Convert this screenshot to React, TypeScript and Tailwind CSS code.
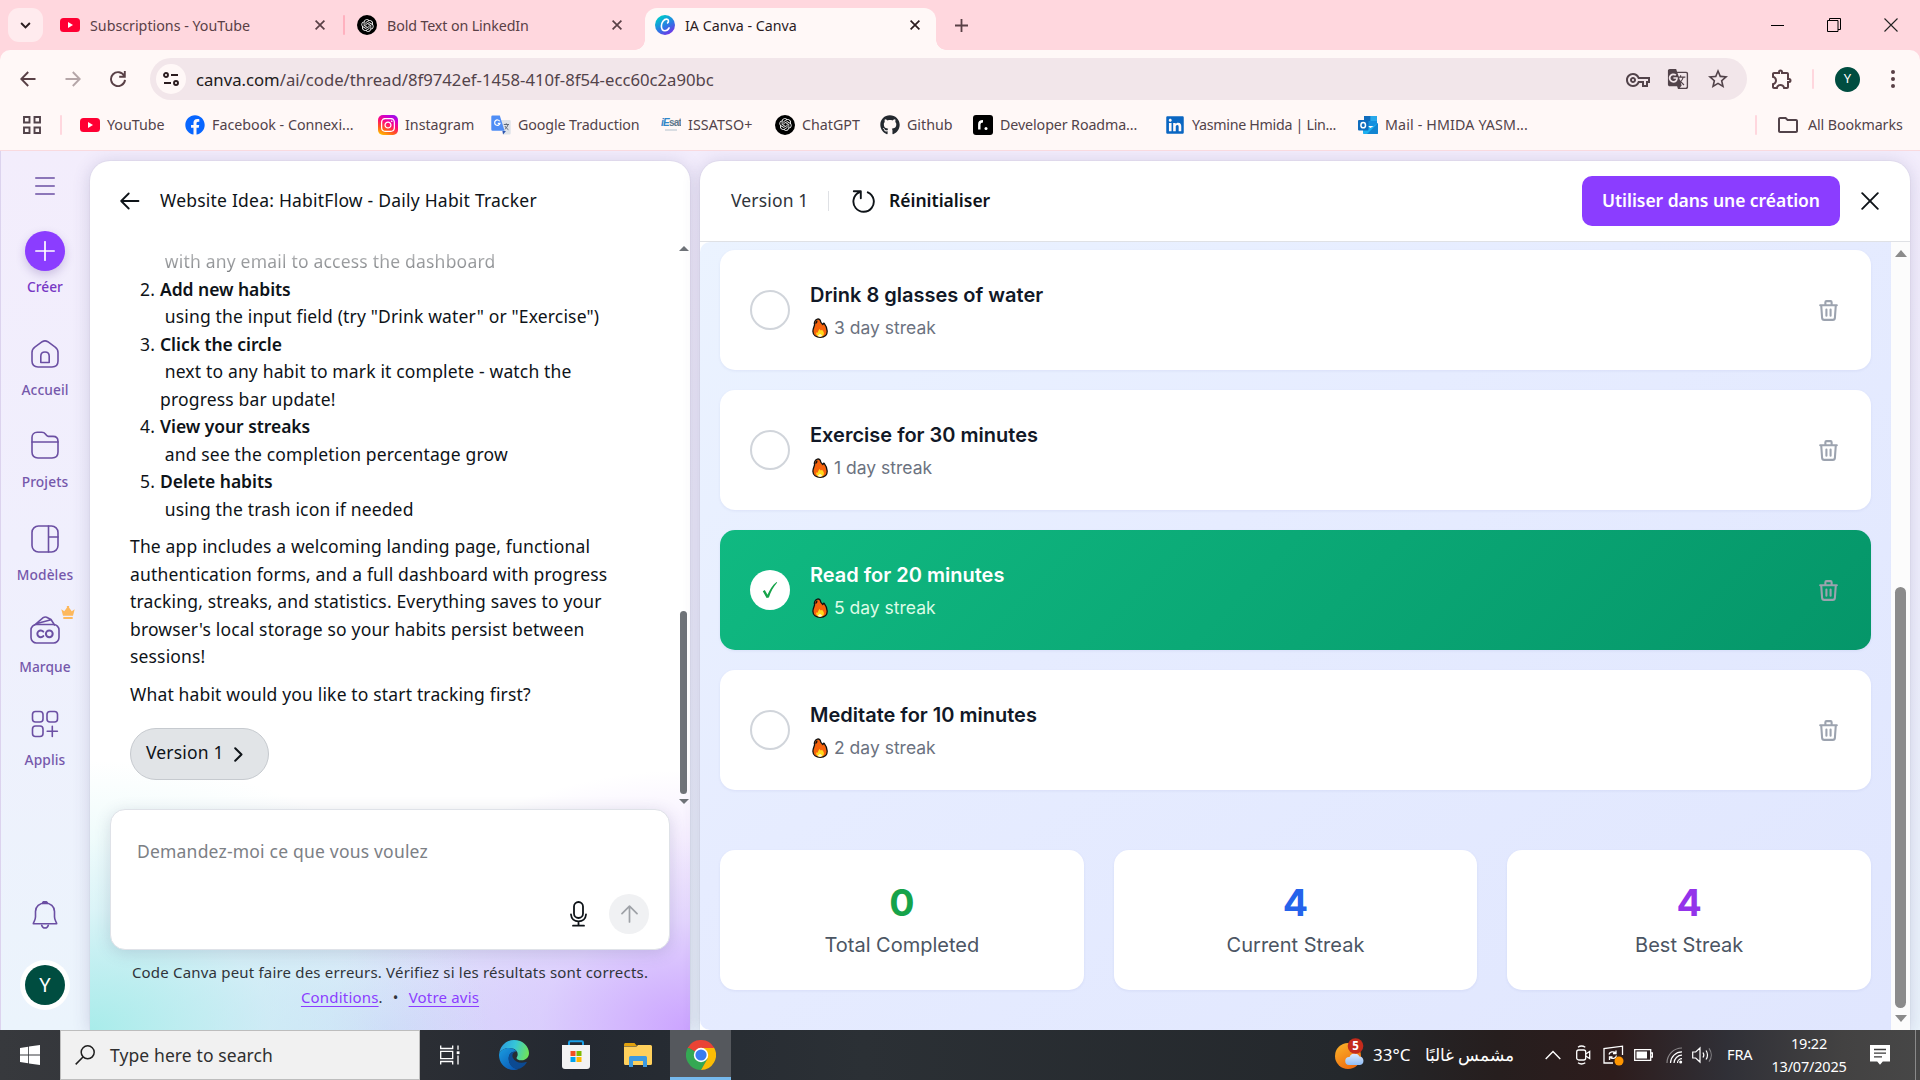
import type { ReactNode } from "react";
import { RiOpenaiFill } from "react-icons/ri";
import { FaFacebook, FaGithub, FaInstagram, FaLinkedin } from "react-icons/fa";
import { MdGTranslate, MdOutlineExtension, MdOutlineFolder, MdOutlineVpnKey, MdStarOutline } from "react-icons/md";

/* ---------- small brand marks ---------- */

function YouTubeMark() {
  return (
    <svg viewBox="0 0 20 14" className="h-[14px] w-5 shrink-0">
      <rect width="20" height="14" rx="3.5" fill="#ff0033" />
      <path d="M8 4v6l5-3z" fill="#fff" />
    </svg>
  );
}

function OpenAiMark() {
  return (
    <span className="flex size-5 shrink-0 items-center justify-center rounded-full bg-black">
      <RiOpenaiFill className="size-[15px] text-white" />
    </span>
  );
}

function CanvaMark() {
  return (
    <svg viewBox="0 0 20 20" className="size-5 shrink-0">
      <defs>
        <linearGradient id="canva" x1="0.2" y1="0" x2="0.8" y2="1">
          <stop offset="0.1" stopColor="#00c4cc" />
          <stop offset="0.55" stopColor="#2a7be4" />
          <stop offset="1" stopColor="#7d2ae8" />
        </linearGradient>
      </defs>
      <circle cx="10" cy="10" r="10" fill="url(#canva)" />
      <path d="M12.600 7.900c1.200-.9 1.400-3.600-.9-3.800-2.800-.1-5.300 3.300-5.300 6.900 0 2.900 1.500 4.700 3.600 4.700 1.900 0 3.300-1.200 4.100-2.800" fill="none" stroke="#fff" strokeWidth="1.600" strokeLinecap="round" />
    </svg>
  );
}

function InstagramMark() {
  return (
    <span className="flex size-5 shrink-0 items-center justify-center rounded-[5px] bg-[linear-gradient(25deg,#ffc400_5%,#ff5a1f_30%,#ff0a78_55%,#c800d8_80%,#7a1cf0)]">
      <FaInstagram className="size-4 text-white" />
    </span>
  );
}

function TranslateMark() {
  return (
    <svg viewBox="0 0 20 20" className="size-5 shrink-0">
      <path d="M8 5h10.500a1.200 1.200 0 0 1 1.200 1.200v12a1.200 1.200 0 0 1-1.200 1.200H12z" fill="#dfe3e8" />
      <path d="M11.500 16l3.500 0-3 3.600z" fill="#2f56b0" />
      <path d="M1.500.5h7.300L13.500 15.800H1.500A1.200 1.200 0 0 1 .3 14.600V1.700A1.200 1.200 0 0 1 1.500.5z" fill="#4f8df5" />
      <path d="M8.700 6.300A2.700 2.700 0 1 0 9 8.300H6.800" fill="none" stroke="#fff" strokeWidth="1.200" />
      <path d="M12.800 9.500h5.200M15.300 8.300v1.200M17 9.500c-.5 2-1.800 3.700-3.200 4.900M13.900 11c.7 1.500 2 2.800 3.500 3.700" fill="none" stroke="#5f6b7a" strokeWidth="1" />
    </svg>
  );
}

function IssatMark() {
  return (
    <span className="flex size-5 shrink-0 flex-col items-center justify-center overflow-hidden font-['Liberation_Sans'] leading-none">
      <span className="text-[10px] font-bold tracking-[-0.8px] text-[#62788c]">
        <i className="text-[#2f86c8]">iE</i>sat
      </span>
      <span className="mt-px h-[2px] w-3 bg-[#d9dde2]" />
    </span>
  );
}

function RoadmapMark() {
  return (
    <svg viewBox="0 0 20 20" className="size-5 shrink-0">
      <rect width="20" height="20" rx="3" fill="#000" />
      <path d="M6.300 14.500V9.200c0-1.800 1-2.900 3.700-2.900" fill="none" stroke="#fff" strokeWidth="2.400" />
      <circle cx="13" cy="13.400" r="1.500" fill="#fff" />
    </svg>
  );
}

function OutlookMark() {
  return (
    <svg viewBox="0 0 20 20" className="size-5 shrink-0">
      <path d="M6 1h13v10H6z" fill="#1490df" />
      <path d="M6 1h6.500v5H6z" fill="#0f6cbd" />
      <path d="M12.500 1H19v5h-6.500z" fill="#28a8ea" />
      <path d="M5 8l7.500 5L20 8v10.300a.7.7 0 0 1-.7.7H5.700a.7.7 0 0 1-.7-.7z" fill="#1db0f0" />
      <path d="M20 8v10.300a.7.7 0 0 1-.7.7H9z" fill="#0a62b8" opacity=".55" />
      <rect y="5" width="10.500" height="10.500" rx="1" fill="#0f6cbd" />
      <ellipse cx="5.200" cy="10.200" rx="2.300" ry="2.600" fill="none" stroke="#fff" strokeWidth="1.500" />
    </svg>
  );
}

/* ---------- browser chrome ---------- */

function CloseGlyph({ color }: { color: string }) {
  return (
    <svg viewBox="0 0 10 10" className="size-[10px] shrink-0" stroke={color} strokeWidth="1.700">
      <path d="M.6.6l8.800 8.800M9.400.6L.6 9.400" />
    </svg>
  );
}

function TabStrip() {
  return (
    <div className="flex h-[50px] bg-[#ffd7de] text-[14.25px] text-[#594046]">
      <div className="ml-2 mt-2 flex h-[34px] w-[35px] items-center justify-center rounded-[11px] bg-[#ffebee]">
        <svg viewBox="0 0 12 8" className="h-[7px] w-[11px]" fill="none" stroke="#2b1c1f" strokeWidth="2.200">
          <path d="M1 1.200l5 5 5-5" />
        </svg>
      </div>
      <div className="ml-[17px] flex w-[285px] items-center">
        <YouTubeMark />
        <span className="ml-[10px] flex-1 whitespace-nowrap pt-px">Subscriptions - YouTube</span>
        <CloseGlyph color="#594046" />
        <span className="ml-[18px] h-5 w-[2px] rounded bg-[#ffb1bf]" />
      </div>
      <div className="ml-[12px] flex w-[265px] items-center">
        <OpenAiMark />
        <span className="ml-[10px] flex-1 whitespace-nowrap pt-px tracking-[-0.12px]">Bold Text on LinkedIn</span>
        <CloseGlyph color="#594046" />
      </div>
      <div className="ml-[13px] flex w-[10px] items-end">
        <span className="size-[10px] bg-[radial-gradient(circle_at_0_0,#ffd7de_9.500px,#fff8f7_10px)]" />
      </div>
      <div className="mt-2 flex h-[42px] w-[291px] items-center rounded-t-[12px] bg-[#fff8f7] pb-2 pl-[10px] pr-[16px] text-[#2b1c1f]">
        <CanvaMark />
        <span className="ml-[10px] flex-1 whitespace-nowrap pt-px">IA Canva - Canva</span>
        <CloseGlyph color="#2b1c1f" />
      </div>
      <div className="flex w-[10px] items-end">
        <span className="size-[10px] bg-[radial-gradient(circle_at_100%_0,#ffd7de_9.500px,#fff8f7_10px)]" />
      </div>
      <div className="ml-[9px] flex flex-1 items-center">
        <svg viewBox="0 0 13 13" className="size-[13px]" stroke="#594046" strokeWidth="1.800">
          <path d="M6.500 0v13M0 6.500h13" />
        </svg>
      </div>
      <div className="flex items-center gap-[43px] pr-[22px]">
        <span className="h-px w-[13px] bg-black" />
        <svg viewBox="0 0 14 14" className="size-[14px]" fill="none" stroke="#000">
          <path d="M.5 2.500h10.500v11H.5zM2.500 2.500v-2h11v11h-2.500" />
        </svg>
        <svg viewBox="0 0 14 14" className="size-[14px]" stroke="#222" strokeWidth="1.100">
          <path d="M.5.5l13 13M13.500.5l-13 13" />
        </svg>
      </div>
    </div>
  );
}

function AddressBar() {
  return (
    <div className="bg-[#ffd7de]">
      <div className="flex h-[58px] items-center rounded-t-[10px] bg-[#fff8f7] pl-5">
        <svg viewBox="0 0 16 16" className="size-4" fill="none" stroke="#594046" strokeWidth="1.900">
          <path d="M15.500 8H1.500M8.200 1L1.300 8l6.900 7" />
        </svg>
        <svg viewBox="0 0 16 16" className="ml-[29px] size-4" fill="none" stroke="#b5a6a8" strokeWidth="1.900">
          <path d="M.5 8h14M7.800 1l6.900 7-6.900 7" />
        </svg>
        <svg viewBox="0 0 16 16" className="ml-[29px] size-4" fill="none" stroke="#594046" strokeWidth="1.900">
          <path d="M14.300 5A7 7 0 1 0 15 8.800M14.800 0v5.800H9.200" />
        </svg>
        <div className="ml-[24px] flex h-[42px] w-[1597px] items-center rounded-full bg-[#f2e6ea] pl-[6px] pr-[17px]">
          <span className="flex size-[30px] items-center justify-center rounded-full bg-[#fff8f7]">
            <svg viewBox="0 0 16 14" className="h-[14px] w-4" fill="none" stroke="#2b1c1f" strokeWidth="1.900">
              <circle cx="3" cy="3" r="2" />
              <path d="M8 3h7M1 11h7" />
              <circle cx="13" cy="11" r="2" />
            </svg>
          </span>
          <span className="ml-[10px] flex-1 pt-[2px] text-[16.7px]  text-[#52434a]">
            <span className="text-[#201a1b]">canva.com</span>/ai/code/thread/8f9742ef-1458-410f-8f54-ecc60c2a90bc
          </span>
          <MdOutlineVpnKey className="mt-px size-6 text-[#52434a]" />
          <MdGTranslate className="ml-[17px] size-[22px] text-[#52434a]" />
          <MdStarOutline className="ml-[17px] size-6 text-[#52434a]" />
        </div>
        <MdOutlineExtension className="ml-[23px] size-6 text-[#594046]" />
        <span className="ml-[18px] h-5 w-[2px] rounded bg-[#ffd7de]" />
        <span className="ml-[21px] flex size-[25px] items-center justify-center rounded-full bg-[#004d40] text-[13px] text-white">Y</span>
        <span className="ml-[31px] flex flex-col gap-[3px]">
          <i className="size-1 rounded-full bg-[#594046]" />
          <i className="size-1 rounded-full bg-[#594046]" />
          <i className="size-1 rounded-full bg-[#594046]" />
        </span>
      </div>
    </div>
  );
}

function Bookmark({ icon, label, className }: { icon: ReactNode; label: string; className: string }) {
  return (
    <div className={`flex shrink-0 items-center gap-[7px] whitespace-nowrap ${className}`}>
      {icon}
      <span>{label}</span>
    </div>
  );
}

function BookmarksBar() {
  return (
    <div className="flex h-[43px] items-center border-b border-[#f9dadf] bg-[#fff8f7] pb-[9px] pl-[23px] text-[14.25px] text-[#52434a]">
      <svg viewBox="0 0 18 18" className="size-[18px]" fill="none" stroke="#52434a" strokeWidth="1.900">
        <path d="M1 1h5.500v5.500H1zM11.500 1H17v5.500h-5.500zM1 11.500h5.500V17H1zM11.500 11.500H17V17h-5.500z" />
      </svg>
      <span className="ml-[19px] h-5 w-[2px] rounded bg-[#ffd7de]" />
      <div className="ml-[18px] flex">
        <Bookmark icon={<YouTubeMark />} label="YouTube" className="w-[105px]" />
        <Bookmark icon={<FaFacebook className="size-5 text-[#0866ff]" />} label="Facebook - Connexi..." className="w-[193px]" />
        <Bookmark icon={<InstagramMark />} label="Instagram" className="w-[113px]" />
        <Bookmark icon={<TranslateMark />} label="Google Traduction" className="w-[170px] tracking-[-0.1px]" />
        <Bookmark icon={<IssatMark />} label="ISSATSO+" className="w-[114px] tracking-[0.1px]" />
        <Bookmark icon={<OpenAiMark />} label="ChatGPT" className="w-[105px]" />
        <Bookmark icon={<FaGithub className="size-5 text-[#24292f]" />} label="Github" className="w-[93px]" />
        <Bookmark icon={<RoadmapMark />} label="Developer Roadma..." className="w-[192px] tracking-[-0.1px]" />
        <Bookmark icon={<FaLinkedin className="size-5 text-[#0a66c2]" />} label="Yasmine Hmida | Lin..." className="w-[193px] tracking-[-0.3px]" />
        <Bookmark icon={<OutlookMark />} label="Mail - HMIDA YASM..." className="w-[397px] tracking-[0.15px]" />
      </div>
      <span className="h-5 w-[2px] rounded bg-[#ffd7de]" />
      <MdOutlineFolder className="ml-[19px] size-6 text-[#52434a]" />
      <span className="ml-2 whitespace-nowrap tracking-[-0.1px]">All Bookmarks</span>
    </div>
  );
}

/* ---------- Canva side rail ---------- */

const rail = { fill: "none", stroke: "#6b4fa3", strokeWidth: 1.6, strokeLinejoin: "round", strokeLinecap: "round" } as const;

function RailItem({ label, children }: { label: string; children: ReactNode }) {
  return (
    <div className="flex h-[92.4px] flex-col items-center">
      <span className="relative flex h-[30px] items-center">{children}</span>
      <span className="mt-[11px] text-[13.75px] font-medium leading-5 tracking-[0.1px]">{label}</span>
    </div>
  );
}

function SideRail() {
  return (
    <nav className="flex w-[90px] shrink-0 flex-col items-center border-l border-[#dcd3ee] pr-px text-[#7558ab]">
      <svg viewBox="0 0 20 18" className="mt-[26px] h-[18px] w-5" {...rail}>
        <path d="M.8 1h18.400M.8 9h18.400M.8 17h18.400" />
      </svg>
      <span className="mt-9 flex size-10 items-center justify-center rounded-full bg-[#8b3dff] shadow-[0_4px_10px_rgba(90,60,150,0.25)]">
        <svg viewBox="0 0 20 20" className="size-5" stroke="#fff" strokeWidth="1.700" strokeLinecap="round">
          <path d="M10 .8v18.400M.8 10h18.400" />
        </svg>
      </span>
      <span className="mt-[6px] text-[13.75px] font-medium leading-5 text-[#7838c4]">Créer</span>
      <div className="mt-[42px]">
        <RailItem label="Accueil">
          <svg viewBox="0 0 28 28" className="size-7" {...rail}>
            <path d="M1 12.400c0-2.200.9-3.900 2.800-5.300l7.400-5.400c1.900-1.200 3.700-1.200 5.600 0l7.400 5.400c1.900 1.400 2.800 3.100 2.800 5.300V21c0 3.800-2.200 6-6 6H7c-3.800 0-6-2.200-6-6z" />
            <path d="M9.800 22.500v-6.300c0-2.600 1.800-4.200 4.200-4.200s4.200 1.600 4.200 4.200v6.300z" />
          </svg>
        </RailItem>
        <RailItem label="Projets">
          <svg viewBox="0 0 28 28" className="-mt-[2px] size-7" {...rail}>
            <path d="M1 6.500C1 3.500 3 1.200 6.200 1.200h4.600c1.500 0 2.700.5 3.600 1.700l1.300 1.700c.4.500.9.800 1.600.8h4.700c3 0 5 2 5 5V21c0 3.800-2.200 6-6 6H7c-3.800 0-6-2.200-6-6z" />
            <path d="M1 11h26" />
          </svg>
        </RailItem>
        <RailItem label="Modèles">
          <svg viewBox="0 0 28 28" className="size-7" {...rail}>
            <rect x="1" y="1" width="26" height="26" rx="6.500" />
            <path d="M17.500 1v26M17.500 12h9.500" />
          </svg>
        </RailItem>
        <RailItem label="Marque">
          <svg viewBox="0 0 30 28" className="-mt-[2px] h-7 w-[30px]" {...rail}>
            <rect x="1" y="8.500" width="28" height="18.500" rx="5.500" />
            <path d="M4.500 9l8.700-7.300c1-.7 2.200-.9 3.400-.5l4.400 2.300L24.500 9M7 7.500l14-3.800" />
            <path d="M13.300 15.600a3.400 3.400 0 1 0 0 4.500" strokeWidth="2" />
            <circle cx="19.300" cy="17.800" r="3.400" strokeWidth="2" />
          </svg>
          <svg viewBox="0 0 14 13" className="absolute -top-[10px] left-[31px] h-[13px] w-[14px]" fill="#fdb85c">
            <path d="M.3 3.300l3 2L6 1.500a1.200 1.200 0 1 1 2 0l2.700 3.800 3-2-1.700 6.500H2zM2.300 10.900h9.400V13H2.300z" />
          </svg>
        </RailItem>
        <RailItem label="Applis">
          <svg viewBox="0 0 28 28" className="size-7" {...rail}>
            <rect x="1.500" y="1.500" width="10.500" height="10.500" rx="3" />
            <rect x="16" y="1.500" width="10.500" height="10.500" rx="3" />
            <rect x="1.500" y="16" width="10.500" height="10.500" rx="3" />
            <path d="M21.300 16.200v10.200M16.200 21.300h10.200" />
          </svg>
        </RailItem>
      </div>
      <svg viewBox="0 0 26 28" className="mt-[100px] h-7 w-[26px]" {...rail}>
        <path d="M1.300 22.800h23.400c0-2-2.200-3-2.200-7V10.500c0-4.800-4-8.500-9.500-8.500s-9.500 3.700-9.500 8.500v5.300c0 4-2.200 5-2.200 7z" />
        <path d="M10.500 2.500a2.500 2 0 0 1 5 0z" fill="#6b4fa3" />
        <path d="M9.700 24.200c.6 1.900 1.800 2.800 3.300 2.800s2.700-.9 3.300-2.800" />
      </svg>
      <span className="mt-[31px] flex size-[50px] shrink-0 items-center justify-center rounded-full bg-white">
        <span className="flex size-10 items-center justify-center rounded-full bg-[#004d40] text-[20px] text-white">Y</span>
      </span>
    </nav>
  );
}

/* ---------- conversation panel ---------- */

function Step({ n, title, children }: { n: number; title: string; children: ReactNode }) {
  return (
    <li className="flex">
      <span className="w-[30px] shrink-0 pl-[10px]">{n}.</span>
      <div className="w-[450px]">
        <strong className="block font-semibold tracking-[-0.05px]">{title}</strong>
        {"\u00a0"}
        {children}
      </div>
    </li>
  );
}

function ChatPanel() {
  return (
    <section className="flex w-[600px] shrink-0 flex-col rounded-t-[20px] bg-white bg-[radial-gradient(ellipse_400px_270px_at_0%_100%,rgba(165,236,233,0.95),rgba(190,242,240,0.45)_45%,transparent),radial-gradient(ellipse_360px_260px_at_100%_100%,#cba3ff,rgba(214,182,255,0.5)_42%,transparent),radial-gradient(ellipse_600px_220px_at_50%_100%,#d3def9,transparent)] text-[#0e1318] shadow-[0_0_0_1px_rgba(64,87,109,0.04),0_2px_18px_rgba(64,60,120,0.2)]">
      <header className="flex h-20 items-center pl-[30px]">
        <svg viewBox="0 0 20 18" className="h-[18px] w-5" fill="none" stroke="#0e1318" strokeWidth="1.800" strokeLinecap="round" strokeLinejoin="round">
          <path d="M18.500 9H1.500M8.700 1.500L1.200 9l7.500 7.500" />
        </svg>
        <h1 className="ml-5 pb-[2px] text-[17.5px] tracking-[0.22px]">Website Idea: HabitFlow - Daily Habit Tracker</h1>
      </header>
      <div className="flex h-[568px] justify-between">
        <div className="pl-10 pt-[7px] text-[17.5px] leading-[27.5px] tracking-[0.16px]">
          <p className="bg-[linear-gradient(#c9cacb,#6f7276)] bg-clip-text pl-[30px] tracking-[0.2px] text-transparent">{"\u00a0"}with any email to access the dashboard</p>
          <ol>
            <Step n={2} title="Add new habits">using the input field (try "Drink water" or "Exercise")</Step>
            <Step n={3} title="Click the circle">next to any habit to mark it complete - watch the<br />progress bar update!</Step>
            <Step n={4} title="View your streaks">and see the completion percentage grow</Step>
            <Step n={5} title="Delete habits">using the trash icon if needed</Step>
          </ol>
          <p className="mt-[10px] w-[490px]">
            The app includes a welcoming landing page, functional<br />
            authentication forms, and a full dashboard with progress<br />
            tracking, streaks, and statistics. Everything saves to your<br />
            browser's local storage so your habits persist between<br />
            sessions!
          </p>
          <p className="mt-[10px]">What habit would you like to start tracking first?</p>
          <button className="mt-5 flex h-[52px] w-[139px] items-center rounded-full border border-[#c6cacf] bg-[#e1e4e7] pb-[2px] pl-[15px]">
            Version 1
            <svg viewBox="0 0 9 15" className="ml-[10px] mt-[3px] h-[15px] w-[9px]" fill="none" stroke="#0e1318" strokeWidth="2" strokeLinecap="round" strokeLinejoin="round">
              <path d="M1.200 1.200l6.300 6.300-6.300 6.300" />
            </svg>
          </button>
        </div>
        <div className="flex w-[13px] flex-col items-center pb-[5px] pt-[5px]">
          <span className="h-0 w-0 border-x-[5px] border-b-[5px] border-x-transparent border-b-[#6f7378]" />
          <span className="mt-[360px] h-[184px] w-[7px] rounded-full bg-[#6f7378]" />
          <span className="mt-[5px] h-0 w-0 border-x-[5px] border-t-[5px] border-x-transparent border-t-[#6f7378]" />
        </div>
      </div>
      <div className="mx-5 flex h-[141px] shrink-0 flex-col justify-between rounded-[15px] border border-[#dfe2e8] bg-white pb-[15px] pl-[26px] pr-[20px] pt-[28px] shadow-[0_3px_16px_rgba(64,70,110,0.18)]">
        <span className="text-[17.5px] leading-[27.5px] tracking-[0.2px] text-[#7c8085]">Demandez-moi ce que vous voulez</span>
        <div className="flex items-center justify-end gap-[22px]">
          <svg viewBox="0 0 17 26" className="h-[26px] w-[17px]" fill="none" stroke="#0e1318" strokeWidth="1.800" strokeLinecap="round">
            <rect x="4" y="1" width="9" height="16" rx="4.500" />
            <path d="M1 13.500c.3 4.200 3.400 6.800 7.500 6.800s7.200-2.600 7.500-6.800M8.500 20.500V24M3 24.700h11" />
          </svg>
          <span className="flex size-10 items-center justify-center rounded-full bg-[#f0f1f3]">
            <svg viewBox="0 0 17 18" className="h-[18px] w-[17px]" fill="none" stroke="#9fa2a7" strokeWidth="1.700" strokeLinecap="round" strokeLinejoin="round">
              <path d="M8.500 17V1.500M1 8.700l7.500-7.500L16 8.700" />
            </svg>
          </span>
        </div>
      </div>
      <footer className="pt-[9.500px] text-center text-[15px] leading-[25px] tracking-[0.19px] text-[#30343a]">
        <p>Code Canva peut faire des erreurs. Vérifiez si les résultats sont corrects.</p>
        <p>
          <a className="text-[#8b3dff] underline underline-offset-[3px]">Conditions</a>.
          <span className="mx-[10px]">•</span>
          <a className="text-[#8b3dff] underline underline-offset-[3px]">Votre avis</a>
        </p>
      </footer>
    </section>
  );
}

/* ---------- habit preview panel ---------- */

function Flame() {
  return (
    <svg viewBox="0 0 16 20" className="ml-[2px] mr-[6px] h-5 w-4">
      <path d="M5.300 1.200c1.500-.6 3 .4 3.200 2 .1 1 .9 1.900 1.700 2.700l.6.700c.4-.8.600-1.500 1.400-1.300 2 2.500 3 5 3 8 0 3.900-3 6-7 6s-7.300-2.200-7.300-6c0-2.500 1-4 1.700-6.500C1.700 4.500 3 2 5.300 1.200z" fill="#f7630c" stroke="#111" strokeWidth="1.300" strokeLinejoin="round" />
      <path d="M3.300 5.300c1.200-.3 1.700-1.200 1.500-2.600" fill="none" stroke="#111" strokeWidth="1.300" />
      <path d="M4 14.500l1.500.3L7.300 11l1.600 1.600 1.200-.8c1 1.500 1.800 2 1.800 3.700 0 2-1.600 3.300-3.900 3.300S4 17.300 4 14.500z" fill="#ffd81c" />
      <path d="M5.800 17.500l2.200-1.700 2.200 1.700c-.6 1-1.300 1.300-2.200 1.300s-1.700-.4-2.200-1.300z" fill="#fff7c9" />
    </svg>
  );
}

function Trash() {
  return (
    <svg viewBox="0 0 24 24" className="size-[25px]" fill="none" stroke="#9ca3af" strokeWidth="2" strokeLinecap="round" strokeLinejoin="round">
      <path d="M19 7l-.867 12.142A2 2 0 0 1 16.138 21H7.862a2 2 0 0 1-1.995-1.858L5 7m5 4v6m4-6v6m1-10V4a1 1 0 0 0-1-1h-4a1 1 0 0 0-1 1v3M4 7h16" />
    </svg>
  );
}

function HabitCard({ name, streak, done }: { name: string; streak: number; done?: boolean }) {
  return (
    <article
      className={`flex h-[120px] items-center rounded-[15px] pl-[30px] pr-[30px] shadow-[0_1px_3px_rgba(60,80,160,0.08)] ${
        done ? "bg-[linear-gradient(135deg,#10b981,#059669)]" : "bg-white"
      }`}
    >
      {done ? (
        <span className="flex size-10 items-center justify-center rounded-full bg-white">
          <svg viewBox="0 0 16 18" className="h-[18px] w-4" fill="#16a34a">
            <path d="M.8 10.200l2-1.200 2.700 4.800C7.500 8.800 10.500 4 14.600.9l.6.500C11.400 5.700 8.600 11 6.900 16.400l-2.300.5z" />
          </svg>
        </span>
      ) : (
        <span className="size-10 rounded-full border-2 border-[#d1d5db]" />
      )}
      <div className="ml-5 flex-1">
        <h3 className={`text-[20px] font-semibold leading-[30px] ${done ? "text-white" : "text-[#111827]"}`}>{name}</h3>
        <p className={`mt-[5px] flex items-center text-[17.5px] leading-[25px] ${done ? "text-[#dcfce7]" : "text-[#6b7280]"}`}>
          <Flame />
          {streak} day streak
        </p>
      </div>
      <Trash />
    </article>
  );
}

function Stat({ value, label, color }: { value: number; label: string; color: string }) {
  return (
    <div className="flex h-[140px] flex-col items-center justify-center rounded-[15px] bg-white shadow-[0_1px_3px_rgba(60,80,160,0.08)]">
      <span className={`text-[37.5px] font-bold leading-[45px] ${color}`}>{value}</span>
      <span className="mt-[5px] text-[20px] leading-[30px] text-[#4b5563]">{label}</span>
    </div>
  );
}

function PreviewPanel() {
  return (
    <section className="ml-[10px] flex w-[1210px] shrink-0 flex-col overflow-hidden rounded-t-[20px] bg-white text-[#0e1318] shadow-[0_0_0_1px_rgba(64,87,109,0.04),0_2px_18px_rgba(64,60,120,0.2)]">
      <header className="flex h-[81px] shrink-0 items-center border-b border-[#dfe1e5] pl-[31px] text-[17.5px]">
        <span className="w-[97px] pb-[2px] tracking-[0.15px] text-[#30343a]">Version 1</span>
        <span className="h-5 w-px bg-[#dfe1e5]" />
        <svg viewBox="0 0 23 23" className="ml-[23px] size-[23px]" fill="none" stroke="#0e1318" strokeWidth="1.900" strokeLinecap="round" strokeLinejoin="round">
          <path d="M15.800 2.300A10.200 10.200 0 1 1 7.200 2.400M1.800 1.200h7v7" />
        </svg>
        <span className="ml-[14px] flex-1 pb-[2px] font-semibold">Réinitialiser</span>
        <button className="h-[50px] w-[258px] rounded-[10px] bg-[#8b3dff] pb-px font-semibold tracking-[-0.05px] text-white">Utiliser dans une création</button>
        <svg viewBox="0 0 18 18" className="ml-[21px] mr-[31px] size-[18px]" stroke="#0e1318" strokeWidth="1.900" strokeLinecap="round">
          <path d="M1.200 1.200l15.600 15.600M16.800 1.200L1.200 16.800" />
        </svg>
      </header>
      <div className="flex h-[788px]">
        <div className="flex w-[1191px] flex-col gap-5 rounded-l-[10px] bg-[linear-gradient(145deg,#ebf3ff,#e6ecff_40%,#e0e6fe)] px-5 pt-2 font-[Inter]">
          <HabitCard name="Drink 8 glasses of water" streak={3} />
          <HabitCard name="Exercise for 30 minutes" streak={1} />
          <HabitCard name="Read for 20 minutes" streak={5} done />
          <HabitCard name="Meditate for 10 minutes" streak={2} />
          <div className="mt-10 grid grid-cols-3 gap-[30px]">
            <Stat value={0} label="Total Completed" color="text-[#16a34a]" />
            <Stat value={4} label="Current Streak" color="text-[#2563eb]" />
            <Stat value={4} label="Best Streak" color="text-[#9333ea]" />
          </div>
        </div>
        <div className="flex w-[19px] flex-col items-center bg-[#fcfcfc] pt-2">
          <span className="h-0 w-0 border-x-[6.500px] border-b-[7px] border-x-transparent border-b-[#8b8b8b]" />
          <span className="mt-[330px] h-[421px] w-[11px] rounded-full bg-[#8b8b8b]" />
          <span className="mt-[7px] h-0 w-0 border-x-[6.500px] border-t-[7px] border-x-transparent border-t-[#8b8b8b]" />
        </div>
      </div>
    </section>
  );
}

/* ---------- Windows taskbar ---------- */

function EdgeIcon() {
  return (
    <svg viewBox="0 0 30 30" className="size-[30px]">
      <defs>
        <linearGradient id="edgeTop" x1="0" y1="0.3" x2="1" y2="0.5">
          <stop offset="0" stopColor="#2b9be0" />
          <stop offset="0.5" stopColor="#36c6d8" />
          <stop offset="1" stopColor="#6ee35b" />
        </linearGradient>
        <linearGradient id="edgeBody" x1="0" y1="0" x2="0.8" y2="1">
          <stop offset="0" stopColor="#1a9de0" />
          <stop offset="1" stopColor="#0a58b5" />
        </linearGradient>
      </defs>
      <path d="M.2 13.500C1.200 5.800 7.300 0 15 0c8.800 0 15 6.300 15 13 0 4.300-3.300 7.300-7.300 7.300-3.600 0-5.200-1.300-5.200-2.400 0-.6 1.200-1.400 1.200-3.500C18.700 10 14.500 8 10 8 5 8 1.700 10.600.2 13.500z" fill="url(#edgeTop)" />
      <path d="M.2 13.500C1.700 10.600 5 8 10 8c3.800 0 6.300 1.600 7.700 3.600-5-.8-8 2.400-8 6.900 0 5.500 4 10 9.800 10.500A15 15 0 0 1 15 30C6.500 30 0 23.300 0 15z" fill="url(#edgeBody)" />
      <path d="M10.500 14.500c1-1.800 3-3.100 5.800-2.700-3 1-3.500 4-2.300 6.300 2 4 7.500 5.900 13 4 .6-.2.900.1.600.7-2.200 3.700-5.600 5.800-9.100 6.300-7-.4-10.700-8.500-8-14.600z" fill="#0c4a92" />
    </svg>
  );
}

function StoreIcon() {
  return (
    <svg viewBox="0 0 30 30" className="size-[30px]">
      <path d="M8 6V2.500A1.300 1.300 0 0 1 9.300 1.200h11.400A1.300 1.300 0 0 1 22 2.500V6" fill="none" stroke="#1aa0e8" strokeWidth="2" />
      <path d="M1 5h28v21a3 3 0 0 1-3 3H4a3 3 0 0 1-3-3z" fill="#f3f3f3" />
      <path d="M9.500 11h5v5h-5z" fill="#f25022" />
      <path d="M15.500 11h5v5h-5z" fill="#7fba00" />
      <path d="M9.500 17h5v5h-5z" fill="#00a4ef" />
      <path d="M15.500 17h5v5h-5z" fill="#ffb900" />
    </svg>
  );
}

function ExplorerIcon() {
  return (
    <svg viewBox="0 0 28 24" className="h-6 w-7">
      <path d="M0 1.500C0 .7.700 0 1.500 0h9L13 3H0z" fill="#e2a10c" />
      <path d="M0 3.500h12.500L14 2h12.500A1.500 1.500 0 0 1 28 3.500v17a1.500 1.500 0 0 1-1.500 1.500h-25A1.500 1.500 0 0 1 0 20.500z" fill="#ffd05c" />
      <path d="M5 24V14.500A1.500 1.500 0 0 1 6.500 13h15a1.500 1.500 0 0 1 1.500 1.500V24h-4v-6H9v6z" fill="#3d9ae0" />
    </svg>
  );
}

function ChromeIcon() {
  return (
    <svg viewBox="0 0 30 30" className="size-[30px]">
      <path d="M15 15L2 7.500A15 15 0 0 1 28 7.500z" fill="#ea4335" />
      <path d="M15 15L2 7.500A15 15 0 0 0 15 30l6.500-11.200z" fill="#34a853" />
      <path d="M15 7.500h13A15 15 0 0 1 15 30l6.500-11.300z" fill="#fbbc05" />
      <path d="M2 7.500h26" stroke="#ea4335" strokeWidth="1" />
      <circle cx="15" cy="15" r="7.200" fill="#fff" />
      <circle cx="15" cy="15" r="5.600" fill="#3b7cf0" />
    </svg>
  );
}

function WeatherIcon() {
  return (
    <svg viewBox="0 0 30 34" className="h-[34px] w-[30px]">
      <defs>
        <linearGradient id="sun" x1="0" y1="0" x2="0.6" y2="1">
          <stop offset="0" stopColor="#fcb62b" />
          <stop offset="1" stopColor="#ee6c0e" />
        </linearGradient>
        <linearGradient id="cloud" x1="0" y1="0" x2="0" y2="1">
          <stop offset="0" stopColor="#dcebff" />
          <stop offset="1" stopColor="#8fbcf5" />
        </linearGradient>
      </defs>
      <circle cx="13" cy="18" r="13" fill="url(#sun)" />
      <path d="M14 27a4 4 0 0 1 .5-8 5.500 5.500 0 0 1 10-.5 4.300 4.300 0 0 1 .5 8.500z" fill="url(#cloud)" />
      <circle cx="20.500" cy="8" r="7.800" fill="#c42b1c" />
      <text x="20.500" y="12" textAnchor="middle" fontSize="11.500" fontWeight="700" fill="#fff">5</text>
    </svg>
  );
}

function Taskbar() {
  return (
    <div className="flex h-[50px] items-stretch bg-[linear-gradient(90deg,#37393d_0%,#2b2e34_22%,#242931_30%,#2b3035_45%,#24282c_70%,#261e1e_78%,#2d1c1c_84%,#303037_90%,#434242_96%,#474747_100%)] text-white">
      <div className="flex w-[60px] items-center justify-center">
        <svg viewBox="0 0 20 20" className="size-5" fill="#fff">
          <path d="M0 2.900l8.200-1.200v7.900H0zM9 1.600L20 0v9.600H9zM0 10.400h8.200v7.900L0 17.100zM9 10.400h11V20L9 18.400z" />
        </svg>
      </div>
      <div className="flex w-[360px] items-center border border-[#bdbdbd] bg-[#f1f1f1] pl-[14px] text-[#2f2f2f]">
        <svg viewBox="0 0 20 20" className="size-5" fill="none" stroke="#1f1f1f" strokeWidth="1.500">
          <circle cx="12.700" cy="7.300" r="6.500" />
          <path d="M8 12L.7 19.400" />
        </svg>
        <span className="ml-[15px] text-[17.5px] tracking-[0.1px]">Type here to search</span>
      </div>
      <div className="flex w-[60px] items-center justify-center">
        <svg viewBox="0 0 20 20" className="size-5" fill="none" stroke="#fff" strokeWidth="1.300">
          <path d="M.7.500v3h12v-3M.7 19.500v-3h12v3M.7 6.300h12v7.400H.7zM18 .5v4.300M18 10.500v9" />
          <path d="M16.700 6.300h2.800v2.800h-2.800z" fill="#fff" stroke="none" />
        </svg>
      </div>
      <div className="flex w-[68px] items-center justify-center"><EdgeIcon /></div>
      <div className="flex w-[56px] items-center justify-center"><StoreIcon /></div>
      <div className="flex w-[66px] items-center justify-center pl-[2px]"><ExplorerIcon /></div>
      <div className="flex w-[61px] items-center justify-center border-b-[3px] border-[#76b9ed] bg-[#55585d] pt-[3px]"><ChromeIcon /></div>
      <div className="ml-auto flex items-center">
        <WeatherIcon />
        <span className="ml-2 w-[49px] whitespace-nowrap text-[17px]">33°C</span>
        <span dir="rtl" className="w-[92px] whitespace-nowrap text-[17.300px]">مشمس غالبًا</span>
        <svg viewBox="0 0 16 10" className="ml-[31px] h-[10px] w-4" fill="none" stroke="#fff" strokeWidth="1.400">
          <path d="M.7 9L8 1.500 15.300 9" />
        </svg>
        <svg viewBox="0 0 15 20" className="ml-[15px] h-5 w-[15px]" fill="none" stroke="#fff" strokeWidth="1.300">
          <rect x=".7" y="5" width="9" height="10" rx="2" />
          <path d="M9.700 9l4-2.500v7l-4-2.500M2 2.300c2-1.500 5-1.500 7.300 0M2 17.700c2 1.500 5 1.500 7.300 0" />
        </svg>
        <svg viewBox="0 0 21 21" className="ml-3 h-[21px] w-[21px]" fill="none" stroke="#fff" strokeWidth="1.300">
          <path d="M19.500 10V1.200L1 3.500V18h9M6 9.500c.5-2.500 4.500-3.800 6.700-1.500M13 5.500V8.500H10M13.500 10.500c-.5 3-4.500 4-6.700 1.500M6.500 15v-3h3" />
          <circle cx="16" cy="16" r="4.500" fill="#ff9500" stroke="none" />
        </svg>
        <svg viewBox="0 0 19 12" className="ml-[10px] h-3 w-[19px]">
          <path d="M.7.700h16v10.600H.7zM17 4h1.500v4H17" fill="none" stroke="#fff" strokeWidth="1.300" />
          <path d="M2.500 2.500h10.500v7H2.500z" fill="#fff" />
        </svg>
        <svg viewBox="0 0 17 17" className="ml-[13px] size-[17px]" fill="none" stroke="#fff" strokeWidth="1.200">
          <path d="M1 16A15 15 0 0 1 16 1" opacity=".45" />
          <path d="M4.500 16A11.500 11.500 0 0 1 16 4.800M8 16a8 8 0 0 1 8-7.800" />
          <path d="M11.500 16a4.500 4.500 0 0 1 4.500-4.300" />
          <circle cx="14.700" cy="15" r="1.500" fill="#fff" stroke="none" />
        </svg>
        <svg viewBox="0 0 21 18" className="ml-[9px] h-[18px] w-[21px]" fill="none" stroke="#fff" strokeWidth="1.200">
          <path d="M.7 6v6h3l4.300 4V2L3.700 6zM11 6.500c1 1.500 1 3.500 0 5M14 4.500c2 2.500 2 6.500 0 9" />
          <path d="M17 2.300c3 4 3 9.400 0 13.400" opacity=".4" />
        </svg>
        <span className="ml-[14px] w-[45px] text-[14.500px] tracking-[-0.1px]">FRA</span>
        <div className="flex w-[74px] flex-col items-center pb-px text-[14.500px] leading-[23px] tracking-[-0.2px]">
          <span>19:22</span>
          <span>13/07/2025</span>
        </div>
        <svg viewBox="0 0 20 20" className="ml-6 mr-[25px] size-5">
          <path d="M0 0h20v16.500h-7.200L10 19.800l-2.800-3.300H0z" fill="#fff" />
          <path d="M4 4.500h12M4 8.200h12M4 11.900h8" stroke="#3a3a3a" strokeWidth="1.300" />
        </svg>
        <span className="mr-[4px] h-[50px] w-px bg-[#8a8a8a]" />
      </div>
    </div>
  );
}

export default function App() {
  return (
    <div className="flex h-[1080px] w-[1920px] flex-col overflow-hidden font-['Noto_Sans',sans-serif]">
      <TabStrip />
      <AddressBar />
      <BookmarksBar />
      <main className="flex h-[879px] overflow-hidden bg-[linear-gradient(#f3edfc,#f0effd_45%,#ebf4fc)]">
        <SideRail />
        <div className="mt-[10px] flex h-[869px]">
          <ChatPanel />
          <PreviewPanel />
        </div>
      </main>
      <Taskbar />
    </div>
  );
}
